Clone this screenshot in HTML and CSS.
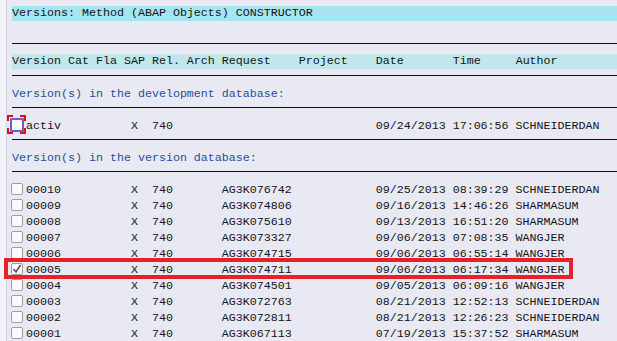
FILE: index.html
```html
<!DOCTYPE html>
<html lang="en">
<head>
    <meta charset="UTF-8">
    <title>Versions: Method (ABAP Objects) CONSTRUCTOR</title>
    <link rel="stylesheet" href="styles.css">
</head>
<body>
    <div class="screen">
        <div class="gutter"></div>

        <div class="list">
            <div class="title">Versions: Method (ABAP Objects) CONSTRUCTOR</div>
            <div class="blank"></div>
            <div class="rule"></div>
            <div class="heading">Version Cat Fla SAP Rel. Arch Request    Project    Date       Time     Author</div>
            <div class="rule"></div>

            <div class="group">Version(s) in the development database:</div>
            <div class="rule"></div>
            <div class="entry">
                <span class="cell"><span class="box active"><svg class="focus" width="19" height="19" viewBox="0 0 19 19"><path d="M1 6V1h5M13 1h5v5M18 13v5h-5M6 18H1v-5" fill="none" stroke="#e01010" stroke-width="2"/></svg></span></span>
                <span>activ</span><span>X</span><span>740</span><span></span>
                <span>09/24/2013</span><span>17:06:56</span><span>SCHNEIDERDAN</span>
            </div>
            <div class="rule"></div>

            <div class="group">Version(s) in the version database:</div>
            <div class="rule"></div>
            <div class="entry">
                <span class="cell"><span class="box"></span></span>
                <span>00010</span><span>X</span><span>740</span><span>AG3K076742</span>
                <span>09/25/2013</span><span>08:39:29</span><span>SCHNEIDERDAN</span>
            </div>
            <div class="entry">
                <span class="cell"><span class="box"></span></span>
                <span>00009</span><span>X</span><span>740</span><span>AG3K074806</span>
                <span>09/16/2013</span><span>14:46:26</span><span>SHARMASUM</span>
            </div>
            <div class="entry">
                <span class="cell"><span class="box"></span></span>
                <span>00008</span><span>X</span><span>740</span><span>AG3K075610</span>
                <span>09/13/2013</span><span>16:51:20</span><span>SHARMASUM</span>
            </div>
            <div class="entry">
                <span class="cell"><span class="box"></span></span>
                <span>00007</span><span>X</span><span>740</span><span>AG3K073327</span>
                <span>09/06/2013</span><span>07:08:35</span><span>WANGJER</span>
            </div>
            <div class="entry">
                <span class="cell"><span class="box"></span></span>
                <span>00006</span><span>X</span><span>740</span><span>AG3K074715</span>
                <span>09/06/2013</span><span>06:55:14</span><span>WANGJER</span>
            </div>
            <div class="entry">
                <span class="cell"><span class="box checked"><svg width="10" height="10" viewBox="0 0 10 10"><path d="M1.5 5l2.5 3L8.5 1" fill="none" stroke="#5b4b66" stroke-width="1.6"/></svg></span></span>
                <span>00005</span><span>X</span><span>740</span><span>AG3K074711</span>
                <span>09/06/2013</span><span>06:17:34</span><span>WANGJER</span>
            </div>
            <div class="entry">
                <span class="cell"><span class="box"></span></span>
                <span>00004</span><span>X</span><span>740</span><span>AG3K074501</span>
                <span>09/05/2013</span><span>06:09:16</span><span>WANGJER</span>
            </div>
            <div class="entry">
                <span class="cell"><span class="box"></span></span>
                <span>00003</span><span>X</span><span>740</span><span>AG3K072763</span>
                <span>08/21/2013</span><span>12:52:13</span><span>SCHNEIDERDAN</span>
            </div>
            <div class="entry">
                <span class="cell"><span class="box"></span></span>
                <span>00002</span><span>X</span><span>740</span><span>AG3K072811</span>
                <span>08/21/2013</span><span>12:26:23</span><span>SCHNEIDERDAN</span>
            </div>
            <div class="entry">
                <span class="cell"><span class="box"></span></span>
                <span>00001</span><span>X</span><span>740</span><span>AG3K067113</span>
                <span>07/19/2013</span><span>15:37:52</span><span>SHARMASUM</span>
            </div>
        </div>

        <!-- highlight drawn over the selected version -->
        <div class="mark"></div>
    </div>
</body>
</html>
```

FILE: styles.css
```css
body {
    margin: 0;
    background-color: #e9e9f4;
    font-family: 'Liberation Mono', 'Courier New', monospace;
    font-size: 11.667px;
    color: #141414;
    overflow: hidden;
}

.screen {
    position: relative;
    display: flex;
    height: 341px;
}

.gutter {
    width: 6px;
    background-color: #f2f2fa;
    border-right: 1px solid #d5d5e6;
    flex-shrink: 0;
}

.list {
    flex: 1;
    padding: 6px 0 0 5px;
}

.title,
.heading {
    height: 15px;
    line-height: 15px;
    margin-bottom: 1px;
    white-space: pre;
}

.title {
    background-color: #a7e4f2;
}

.heading {
    background-color: #c0e8ec;
}

.blank {
    height: 16px;
}

.rule {
    height: 5px;
    border-bottom: 1px solid #111;
    margin-bottom: 10px;
}

.group {
    height: 16px;
    line-height: 16px;
    color: #1e4f9c;
    white-space: pre;
}

.entry {
    display: grid;
    grid-template-columns: 2ch 15ch 3ch 10ch 22ch 11ch 9ch 1fr;
    height: 16px;
    line-height: 16px;
    white-space: nowrap;
}

.cell {
    position: relative;
}

.box {
    position: absolute;
    left: -1px;
    top: 1px;
    width: 10px;
    height: 10px;
    background-color: #fbfbfd;
    border: 1px solid #9b9ba4;
    border-radius: 2px;
}

.box.active {
    left: -2px;
    top: 0;
    width: 10px;
    height: 10px;
    border: 2px solid #6a60c6;
    border-radius: 1px;
}

.box.checked svg {
    display: block;
    margin: 0;
}

.focus {
    position: absolute;
    left: -5px;
    top: -5px;
}

.mark {
    position: absolute;
    left: 4px;
    top: 258px;
    width: 561px;
    height: 13px;
    border: 4px solid #e8202a;
}
```
